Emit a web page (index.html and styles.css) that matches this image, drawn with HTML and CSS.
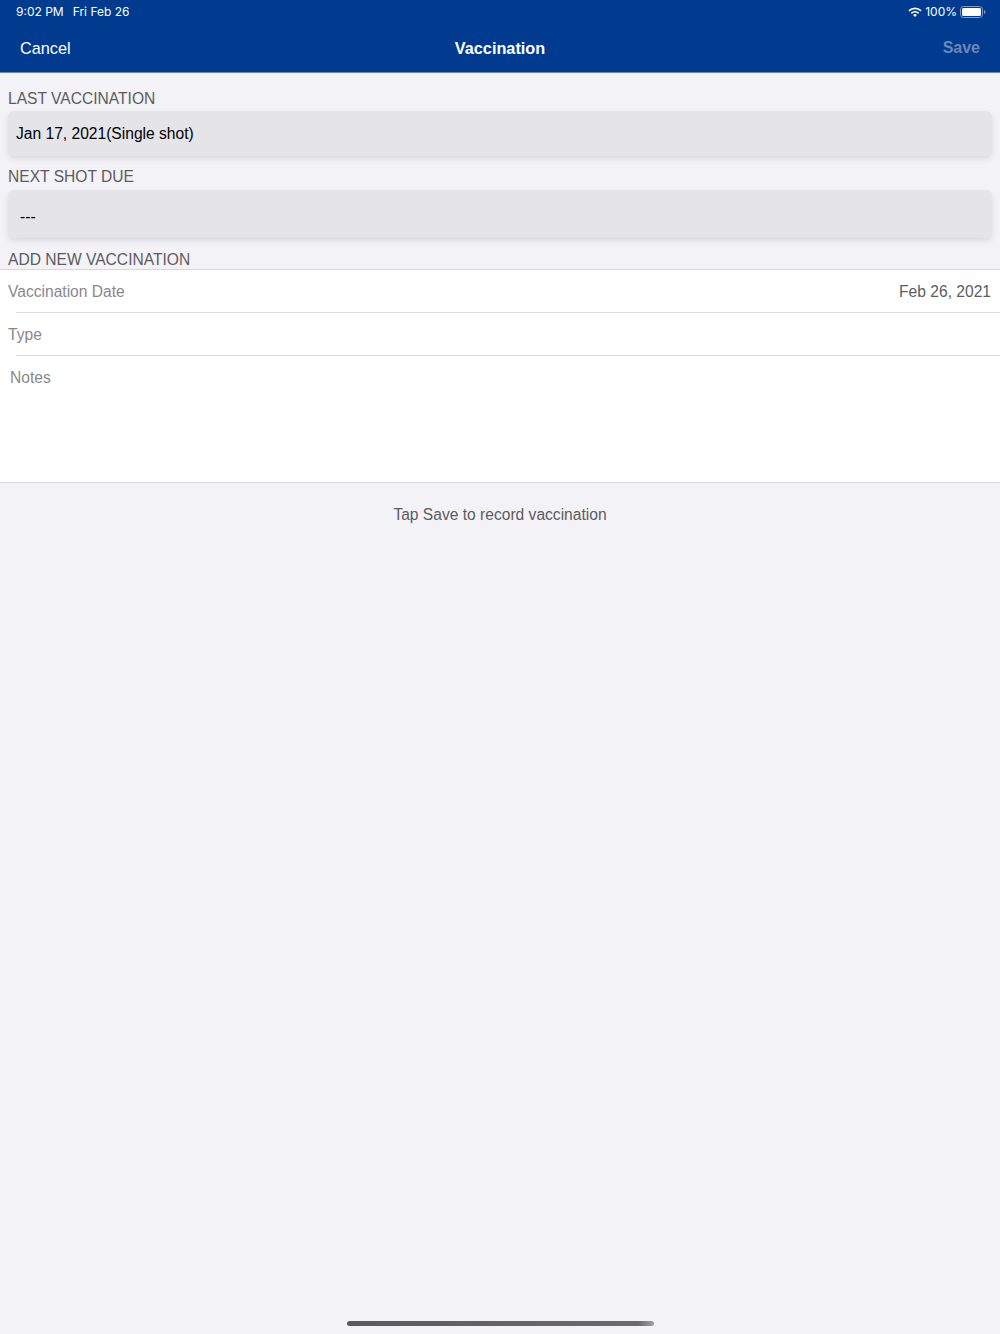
FILE: index.html
```html
<!DOCTYPE html>
<html lang="en">
<head>
    <meta charset="UTF-8">
    <meta name="viewport" content="width=device-width, initial-scale=1.0">
    <title>Vaccination</title>
    <link rel="stylesheet" href="styles.css">
</head>
<body>

<header class="topbar">
    <div class="status">
        <div class="status-time"><span>9:02 PM</span><span>Fri Feb 26</span></div>
        <div class="status-right">
            <svg class="wifi" width="14" height="10" viewBox="0 0 14 10">
                <path d="M0.400 3.300a9.400 9.400 0 0 1 13.200 0l-1.100 1.200a7.800 7.800 0 0 0-11 0z" fill="#fff"/>
                <path d="M2.800 5.700a6 6 0 0 1 8.400 0l-1.100 1.200a4.400 4.400 0 0 0-6.200 0z" fill="#fff"/>
                <path d="M5.100 8a2.700 2.700 0 0 1 3.800 0L7 10z" fill="#fff"/>
            </svg>
            <span>100%</span>
            <svg class="battery" width="26" height="12" viewBox="0 0 26 12">
                <rect x="0.500" y="0.500" width="22" height="11" rx="3" fill="none" stroke="#7f9bc9"/>
                <rect x="2" y="2" width="19" height="8" rx="1.500" fill="#fff"/>
                <path d="M24 4v4c.8-.3 1.400-1 1.400-2s-.6-1.700-1.400-2z" fill="#7f9bc9"/>
            </svg>
        </div>
    </div>
    <nav class="navbar">
        <span class="nav-btn">Cancel</span>
        <span class="nav-title">Vaccination</span>
        <span class="nav-btn nav-save">Save</span>
    </nav>
</header>

<main class="content">
    <h2 class="section-label first">LAST VACCINATION</h2>
    <div class="info-card card-last">Jan 17, 2021(Single shot)</div>

    <h2 class="section-label second">NEXT SHOT DUE</h2>
    <div class="info-card card-next">---</div>

    <h2 class="section-label third">ADD NEW VACCINATION</h2>
    <section class="form-table">
        <div class="form-row">
            <span class="field-name">Vaccination Date</span>
            <span class="field-value">Feb 26, 2021</span>
        </div>
        <div class="form-row">
            <span class="field-name">Type</span>
        </div>
        <div class="notes-row">Notes</div>
    </section>

    <p class="hint">Tap Save to record vaccination</p>
</main>

<div class="home-bar"></div>

</body>
</html>
```

FILE: styles.css
```css
* {
    box-sizing: border-box;
}
body {
    margin: 0;
    height: 1334px;
    overflow: hidden;
    position: relative;
    background-color: #f2f2f7;
    font-family: "Liberation Sans", Arial, sans-serif;
    font-size: 15.6px;
}
.topbar {
    height: 73px;
    background-color: #003b90;
    border-bottom: 1px solid #6d83ad;
    color: #fff;
}
.status {
    height: 23px;
    padding: 0 14px 0 16px;
    display: flex;
    justify-content: space-between;
    align-items: center;
    font-family: Inter, "Liberation Sans", sans-serif;
    font-size: 12px;
}
.status-time {
    display: flex;
    gap: 9px;
}
.status-right {
    display: flex;
    align-items: center;
    gap: 3px;
}
.navbar {
    height: 50px;
    padding: 0 20px;
    display: flex;
    justify-content: space-between;
    align-items: center;
    font-size: 16.3px;
}
.nav-btn {
    width: 60px;
}
.nav-title {
    font-weight: bold;
}
.nav-save {
    color: #6a88b9;
    font-size: 16px;
    font-weight: bold;
    text-align: right;
}
.section-label {
    margin: 0;
    padding-left: 8px;
    font-size: 15.6px;
    font-weight: normal;
    line-height: 18px;
    color: #5c5c60;
}
.section-label.first {
    padding-top: 17px;
}
.section-label.second {
    padding-top: 12px;
}
.section-label.third {
    padding-top: 13px;
    height: 31px;
}
.info-card {
    margin: 3px 8px 0;
    padding-left: 8px;
    background-color: #e4e4e9;
    border-radius: 6px;
    box-shadow: 0 3px 6px rgba(0, 0, 0, 0.1);
    color: #000;
    display: flex;
    align-items: center;
}
.card-last {
    height: 45px;
}
.card-next {
    margin-top: 4px;
    height: 48px;
    padding: 6px 0 0 12px;
}
.form-table {
    background-color: #fff;
    border-top: 1px solid #d8d8dc;
    border-bottom: 1px solid #d8d8dc;
    height: 214px;
}
.form-row {
    height: 43px;
    padding: 0 9px 0 8px;
    display: flex;
    justify-content: space-between;
    align-items: center;
    position: relative;
    color: #5c5c60;
}
.form-row::after {
    content: "";
    position: absolute;
    left: 16px;
    right: 0;
    bottom: 0;
    height: 1px;
    background-color: #dcdcdf;
}
.field-name {
    color: #88888c;
}
.notes-row {
    padding: 13px 0 0 10px;
    color: #88888c;
}
.hint {
    margin: 23px 0 0;
    text-align: center;
    color: #5c5c60;
    line-height: 18px;
}
.home-bar {
    position: absolute;
    left: 347px;
    bottom: 8px;
    width: 307px;
    height: 5px;
    border-radius: 3px;
    background: linear-gradient(90deg, #5a5a5e, #6c6c70 95%, #a0a0a6);
}
```
